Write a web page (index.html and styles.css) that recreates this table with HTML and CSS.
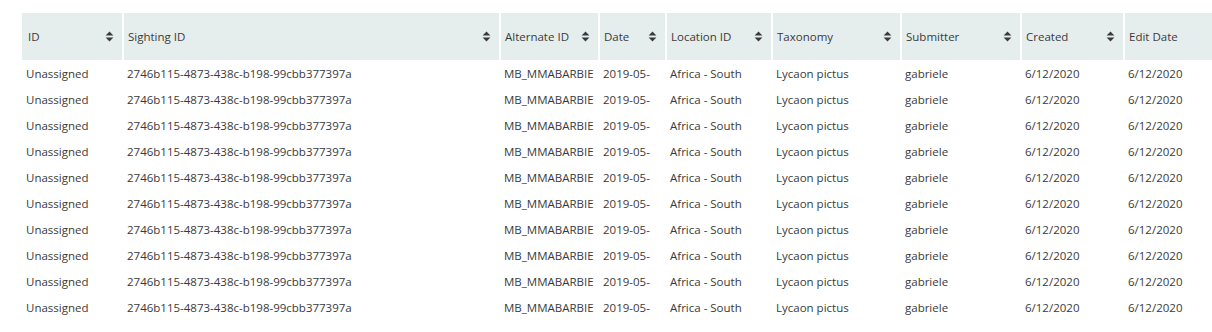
FILE: index.html
```html
<!DOCTYPE html>
<html>
<head>
<meta charset="utf-8">
<link rel="stylesheet" href="styles.css">
</head>
<body>
<div class="wrap">
<table class="grid">
<colgroup>
<col class="c1"><col class="c2"><col class="c3"><col class="c4"><col class="c5"><col class="c6"><col class="c7"><col class="c8"><col class="c9">
</colgroup>
<thead>
<tr>
<th><div class="hd"><span>ID</span><svg class="sort" viewBox="0 0 9 11"><path d="M0.6 4.4 L4.5 0.5 L8.4 4.4 Z M0.6 6.6 L4.5 10.5 L8.4 6.6 Z"/></svg></div></th>
<th><div class="hd"><span>Sighting ID</span><svg class="sort" viewBox="0 0 9 11"><path d="M0.6 4.4 L4.5 0.5 L8.4 4.4 Z M0.6 6.6 L4.5 10.5 L8.4 6.6 Z"/></svg></div></th>
<th><div class="hd"><span>Alternate ID</span><svg class="sort" viewBox="0 0 9 11"><path d="M0.6 4.4 L4.5 0.5 L8.4 4.4 Z M0.6 6.6 L4.5 10.5 L8.4 6.6 Z"/></svg></div></th>
<th><div class="hd"><span>Date</span><svg class="sort" viewBox="0 0 9 11"><path d="M0.6 4.4 L4.5 0.5 L8.4 4.4 Z M0.6 6.6 L4.5 10.5 L8.4 6.6 Z"/></svg></div></th>
<th><div class="hd"><span>Location ID</span><svg class="sort" viewBox="0 0 9 11"><path d="M0.6 4.4 L4.5 0.5 L8.4 4.4 Z M0.6 6.6 L4.5 10.5 L8.4 6.6 Z"/></svg></div></th>
<th><div class="hd"><span>Taxonomy</span><svg class="sort" viewBox="0 0 9 11"><path d="M0.6 4.4 L4.5 0.5 L8.4 4.4 Z M0.6 6.6 L4.5 10.5 L8.4 6.6 Z"/></svg></div></th>
<th><div class="hd"><span>Submitter</span><svg class="sort" viewBox="0 0 9 11"><path d="M0.6 4.4 L4.5 0.5 L8.4 4.4 Z M0.6 6.6 L4.5 10.5 L8.4 6.6 Z"/></svg></div></th>
<th><div class="hd"><span>Created</span><svg class="sort" viewBox="0 0 9 11"><path d="M0.6 4.4 L4.5 0.5 L8.4 4.4 Z M0.6 6.6 L4.5 10.5 L8.4 6.6 Z"/></svg></div></th>
<th><div class="hd"><span>Edit Date</span></div></th>
</tr>
</thead>
<tbody>
<tr><td>Unassigned</td><td>2746b115-4873-438c-b198-99cbb377397a</td><td>MB_MMABARBIE</td><td>2019-05-</td><td>Africa - South</td><td>Lycaon pictus</td><td>gabriele</td><td>6/12/2020</td><td>6/12/2020</td></tr>
<tr><td>Unassigned</td><td>2746b115-4873-438c-b198-99cbb377397a</td><td>MB_MMABARBIE</td><td>2019-05-</td><td>Africa - South</td><td>Lycaon pictus</td><td>gabriele</td><td>6/12/2020</td><td>6/12/2020</td></tr>
<tr><td>Unassigned</td><td>2746b115-4873-438c-b198-99cbb377397a</td><td>MB_MMABARBIE</td><td>2019-05-</td><td>Africa - South</td><td>Lycaon pictus</td><td>gabriele</td><td>6/12/2020</td><td>6/12/2020</td></tr>
<tr><td>Unassigned</td><td>2746b115-4873-438c-b198-99cbb377397a</td><td>MB_MMABARBIE</td><td>2019-05-</td><td>Africa - South</td><td>Lycaon pictus</td><td>gabriele</td><td>6/12/2020</td><td>6/12/2020</td></tr>
<tr><td>Unassigned</td><td>2746b115-4873-438c-b198-99cbb377397a</td><td>MB_MMABARBIE</td><td>2019-05-</td><td>Africa - South</td><td>Lycaon pictus</td><td>gabriele</td><td>6/12/2020</td><td>6/12/2020</td></tr>
<tr><td>Unassigned</td><td>2746b115-4873-438c-b198-99cbb377397a</td><td>MB_MMABARBIE</td><td>2019-05-</td><td>Africa - South</td><td>Lycaon pictus</td><td>gabriele</td><td>6/12/2020</td><td>6/12/2020</td></tr>
<tr><td>Unassigned</td><td>2746b115-4873-438c-b198-99cbb377397a</td><td>MB_MMABARBIE</td><td>2019-05-</td><td>Africa - South</td><td>Lycaon pictus</td><td>gabriele</td><td>6/12/2020</td><td>6/12/2020</td></tr>
<tr><td>Unassigned</td><td>2746b115-4873-438c-b198-99cbb377397a</td><td>MB_MMABARBIE</td><td>2019-05-</td><td>Africa - South</td><td>Lycaon pictus</td><td>gabriele</td><td>6/12/2020</td><td>6/12/2020</td></tr>
<tr><td>Unassigned</td><td>2746b115-4873-438c-b198-99cbb377397a</td><td>MB_MMABARBIE</td><td>2019-05-</td><td>Africa - South</td><td>Lycaon pictus</td><td>gabriele</td><td>6/12/2020</td><td>6/12/2020</td></tr>
<tr><td>Unassigned</td><td>2746b115-4873-438c-b198-99cbb377397a</td><td>MB_MMABARBIE</td><td>2019-05-</td><td>Africa - South</td><td>Lycaon pictus</td><td>gabriele</td><td>6/12/2020</td><td>6/12/2020</td></tr>
</tbody>
</table>
</div>
</body>
</html>
```
FILE: styles.css
```css
html, body {
  margin: 0;
  padding: 0;
  overflow: hidden;
  background: #fff;
}
body {
  font-family: "Open Sans", "Noto Sans", sans-serif;
  font-size: 11.5px;
  color: #3a3a3a;
}
.wrap {
  padding: 13px 0 0 22px;
}
.grid {
  border-collapse: separate;
  border-spacing: 0;
  table-layout: fixed;
  width: 1201px;
}
.c1 { width: 100px; }
.c2 { width: 377px; }
.c3 { width: 99px; }
.c4 { width: 67px; }
.c5 { width: 106px; }
.c6 { width: 129px; }
.c7 { width: 120px; }
.c8 { width: 103px; }
.c9 { width: 100px; }
.grid th {
  background: #e6eeed;
  height: 47px;
  padding: 0 8px 0 4px;
  font-weight: normal;
  text-align: left;
  border-left: 2px solid #fff;
}
.grid th:first-child {
  border-left: none;
  padding-left: 6px;
}
.hd {
  display: flex;
  align-items: center;
  justify-content: space-between;
  white-space: nowrap;
}
.sort {
  width: 9px;
  height: 11px;
  fill: #3a3a3a;
  flex: none;
}
.grid td {
  height: 26px;
  padding: 0 0 0 3px;
  white-space: nowrap;
  overflow: hidden;
  border-left: 2px solid transparent;
}
.grid td:first-child {
  border-left: none;
  padding-left: 4px;
}
```
